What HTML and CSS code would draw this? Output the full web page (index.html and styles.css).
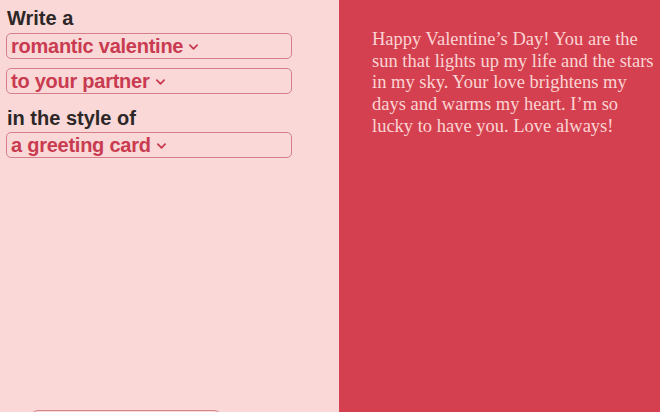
FILE: index.html
```html
<!DOCTYPE html>
<html lang="en">
<head>
<meta charset="utf-8">
<title>Valentine writer</title>
<link rel="stylesheet" href="styles.css">
</head>
<body>
<main class="app">
  <section class="prompt">
    <h2 class="label">Write a</h2>
    <div class="select"><span>romantic valentine</span><svg class="chev" viewBox="0 0 10 6" width="9" height="6"><polyline points="1,1 5,5 9,1"/></svg></div>
    <div class="select"><span>to your partner</span><svg class="chev" viewBox="0 0 10 6" width="9" height="6"><polyline points="1,1 5,5 9,1"/></svg></div>
    <h2 class="label label-second">in the style of</h2>
    <div class="select"><span>a greeting card</span><svg class="chev" viewBox="0 0 10 6" width="9" height="6"><polyline points="1,1 5,5 9,1"/></svg></div>
    <div class="generate" aria-hidden="true"></div>
  </section>
  <section class="card">
    <p class="message">Happy Valentine’s Day! You are the<br>sun that lights up my life and the stars<br>in my sky. Your love brightens my<br>days and warms my heart. I’m so<br>lucky to have you. Love always!</p>
  </section>
</main>
</body>
</html>
```
FILE: styles.css
```css
html, body {
  margin: 0;
  padding: 0;
  height: 412px;
  overflow: hidden;
}

.app {
  display: flex;
  width: 660px;
  height: 412px;
}

.prompt {
  width: 339px;
  box-sizing: border-box;
  height: 412px;
  overflow: hidden;
  background: #f9d8d7;
  padding: 7px 47px 0 6px;
  display: flex;
  flex-direction: column;
  font-family: "Liberation Sans", Arial, sans-serif;
}

.label {
  margin: 0 0 4px 1px;
  font-size: 20px;
  line-height: 22px;
  font-weight: 700;
  color: #2d2727;
}

.label-second {
  margin-top: 4px;
  margin-bottom: 3px;
}

.select {
  height: 26px;
  box-sizing: border-box;
  border: 1px solid #d4808a;
  border-radius: 5px;
  padding: 0 4px;
  margin-bottom: 9px;
  display: flex;
  align-items: center;
  gap: 6px;
  color: #c93b50;
  font-size: 20px;
  line-height: 24px;
  font-weight: 700;
  letter-spacing: -0.25px;
}

.select:last-of-type {
  margin-bottom: 0;
}

.chev {
  flex: none;
  margin-top: 1px;
}

.chev polyline {
  fill: none;
  stroke: #c93b50;
  stroke-width: 2;
  stroke-linecap: round;
  stroke-linejoin: round;
}

.generate {
  margin: auto 0 -36px 24px;
  width: 192px;
  height: 38px;
  flex: none;
  box-sizing: border-box;
  border: 1.5px solid #d6868d;
  border-radius: 8px;
  background: #f9d8d7;
}

.card {
  flex: 1;
  background: #d4404f;
  padding: 29px 0 0 33px;
}

.message {
  margin: 0;
  font-family: "Liberation Serif", "Times New Roman", serif;
  font-size: 18.5px;
  line-height: 21.7px;
  color: #fbd4d4;
  white-space: nowrap;
}
```
